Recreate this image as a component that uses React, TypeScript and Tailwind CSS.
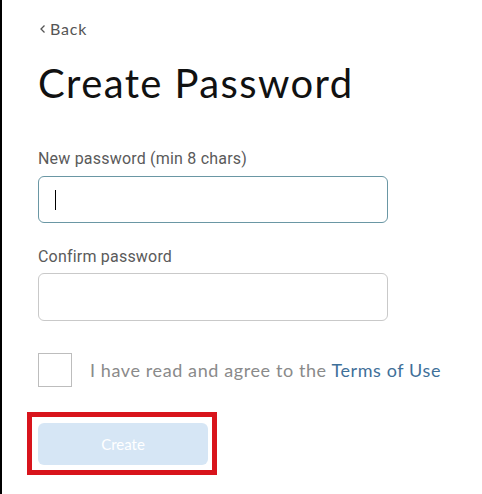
import React from "react";

export default function App() {
  return (
    <div className="w-[482px] h-[494px] bg-white border-l-2 border-black pl-[36px] overflow-hidden" style={{ fontFamily: "Lato, 'Noto Sans', sans-serif" }}>
      <div className="pt-[20px] h-[38px] flex items-center text-[16px] leading-[18px] text-[#555] tracking-[0.8px]">
        <svg width="7" height="10" viewBox="0 0 7 10" className="mr-[4px] ml-[1px]">
          <path d="M5.5 1.5 L2 5 L5.5 8.5" fill="none" stroke="#555" strokeWidth="1.3" />
        </svg>
        <span>Back</span>
      </div>
      <h1 className="mt-[21px] text-[40px] leading-[48px] text-[#111] font-normal tracking-[1.4px]">Create Password</h1>
      <div className="mt-[42px] text-[16px] leading-[20px] text-[#5a5a5a] tracking-[0.2px]" style={{ fontFamily: "Roboto, sans-serif" }}>
        New password (min 8 chars)
      </div>
      <div className="mt-[7px] w-[350px] h-[47px] border border-[#6a97a4] rounded-[6px] flex items-center pl-[16px]">
        <span className="w-[1px] h-[20px] bg-black" />
      </div>
      <div className="mt-[24px] text-[16px] leading-[20px] text-[#5a5a5a] tracking-[0.2px]" style={{ fontFamily: "Roboto, sans-serif" }}>
        Confirm password
      </div>
      <div className="mt-[6px] w-[350px] h-[48px] border border-[#c9c9c9] rounded-[6px]" />
      <div className="mt-[32px] flex items-center">
        <div className="w-[34px] h-[34px] border border-[#bdbdbd]" />
        <span className="ml-[18px] text-[18px] text-[#8a8a8a] tracking-[0.6px]">
          I have read and agree to the <span className="text-[#3f7099]">Terms of Use</span>
        </span>
      </div>
      <div className="mt-[25px] -ml-[11px] w-[190px] h-[63px] border-[5px] border-[#d8141c] p-[6px] pr-[4px]">
        <div className="w-[170px] h-[42px] bg-[#d6e6f5] rounded-[6px] flex items-center justify-center text-white text-[15px]">
          Create
        </div>
      </div>
    </div>
  );
}
